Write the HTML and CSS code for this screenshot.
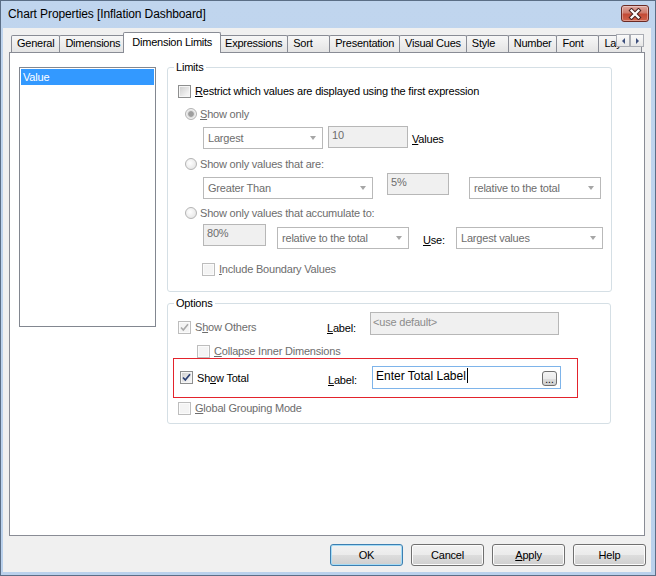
FILE: index.html
```html
<!DOCTYPE html>
<html>
<head>
<meta charset="utf-8">
<title>Chart Properties</title>
<link rel="stylesheet" href="styles.css">
</head>
<body>
<div class="window">
  <div class="titlebar">
    <span class="title">Chart Properties [Inflation Dashboard]</span>
    <div class="close">
      <svg width="14" height="12" viewBox="0 0 14 12">
        <path d="M3.5 2.5 L10.5 9.5 M10.5 2.5 L3.5 9.5" stroke="#4a2320" stroke-width="4.2" stroke-linecap="square"/>
        <path d="M3.5 2.5 L10.5 9.5 M10.5 2.5 L3.5 9.5" stroke="#ffffff" stroke-width="2.2" stroke-linecap="square"/>
      </svg>
    </div>
  </div>
  <div class="client">
    <div class="tabs">
      <div class="tab">General</div>
      <div class="tab">Dimensions</div>
      <div class="tab active">Dimension Limits</div>
      <div class="tab">Expressions</div>
      <div class="tab">Sort</div>
      <div class="tab">Presentation</div>
      <div class="tab">Visual Cues</div>
      <div class="tab">Style</div>
      <div class="tab">Number</div>
      <div class="tab">Font</div>
      <div class="tab">Layout</div>
      <div class="tab-scroll">
        <span class="sbtn"><span class="tri-left"></span></span>
        <span class="sbtn"><span class="tri-right"></span></span>
      </div>
    </div>
    <div class="panel">
      <div class="listbox">
        <div class="item selected">Value</div>
      </div>
      <div class="right">
        <fieldset class="group limits">
          <legend>Limits</legend>
          <div class="line restrict">
            <span class="cb"></span>
            <span class="lbl"><u>R</u>estrict which values are displayed using the first expression</span>
          </div>
          <div class="line radio-line r-only">
            <span class="rb on"></span>
            <span class="lbl dis"><u>S</u>how only</span>
          </div>
          <div class="ctrls c-only">
            <div class="combo combo-largest"><span class="val">Largest</span><span class="arrow"></span></div>
            <div class="tb tb-count">10</div>
            <span class="side-lbl values-lbl"><u>V</u>alues</span>
          </div>
          <div class="line radio-line r-values">
            <span class="rb"></span>
            <span class="lbl dis">Show only values that are:</span>
          </div>
          <div class="ctrls c-values">
            <div class="combo combo-greater"><span class="val">Greater Than</span><span class="arrow"></span></div>
            <div class="tb tb-pct">5%</div>
            <div class="combo combo-rel1"><span class="val">relative to the total</span><span class="arrow"></span></div>
          </div>
          <div class="line radio-line r-accum">
            <span class="rb"></span>
            <span class="lbl dis">Show only values that accumulate to:</span>
          </div>
          <div class="ctrls c-accum">
            <div class="tb tb-accum">80%</div>
            <div class="combo combo-rel2"><span class="val">relative to the total</span><span class="arrow"></span></div>
            <span class="side-lbl use-lbl"><u>U</u>se:</span>
            <div class="combo combo-use"><span class="val">Largest values</span><span class="arrow"></span></div>
          </div>
          <div class="line boundary">
            <span class="cb dis-cb"></span>
            <span class="lbl dis"><u>I</u>nclude Boundary Values</span>
          </div>
        </fieldset>

        <fieldset class="group options">
          <legend>Options</legend>
          <div class="opt-row others-row">
            <div class="opt-chk others-chk">
              <span class="cb dis-cb"><svg width="11" height="11" viewBox="0 0 11 11"><path d="M2 5.5 L4.3 8 L9 2.2" fill="none" stroke="#a9a9a9" stroke-width="1.6"/></svg></span>
              <span class="lbl dis">S<u>h</u>ow Others</span>
            </div>
            <span class="opt-label"><u>L</u>abel:</span>
            <div class="tb tb-label">&lt;use default&gt;</div>
          </div>
          <div class="line collapse">
            <span class="cb dis-cb"></span>
            <span class="lbl dis"><u>C</u>ollapse Inner Dimensions</span>
          </div>
          <div class="highlight">
            <div class="opt-row total-row">
              <div class="opt-chk total-chk">
                <span class="cb"><svg width="11" height="11" viewBox="0 0 11 11"><path d="M2 5.5 L4.3 8 L9 2.2" fill="none" stroke="#2a3f73" stroke-width="1.7"/></svg></span>
                <span class="lbl">Sh<u>o</u>w Total</span>
              </div>
              <span class="opt-label total-label"><u>L</u>abel:</span>
              <div class="input-focus">Enter Total Label<span class="caret"></span><span class="dots">...</span></div>
            </div>
          </div>
          <div class="line global">
            <span class="cb dis-cb"></span>
            <span class="lbl dis"><u>G</u>lobal Grouping Mode</span>
          </div>
        </fieldset>
      </div>
    </div>
    <div class="buttons">
      <div class="btn default">OK</div>
      <div class="btn">Cancel</div>
      <div class="btn"><u>A</u>pply</div>
      <div class="btn">Help</div>
    </div>
  </div>
</div>
</body>
</html>
```

FILE: styles.css
```css
* { box-sizing: border-box; }
html, body { margin: 0; padding: 0; }
body {
  width: 656px;
  height: 576px;
  overflow: hidden;
  font-family: "Liberation Sans", Arial, sans-serif;
  font-size: 11px;
  letter-spacing: -0.2px;
  color: #000;
  background: #fff;
}
u { text-decoration: underline; text-underline-offset: 1px; }

.window {
  width: 656px;
  height: 576px;
  display: flex;
  flex-direction: column;
  border: 1px solid #5b6e86;
  background: linear-gradient(#c0d5ee, #bad1ec);
  padding: 0 4px 3px 2px;
}

.titlebar {
  flex: none;
  height: 27px;
  display: flex;
  justify-content: space-between;
  align-items: flex-start;
  padding: 0 2px 0 5px;
}
.title {
  font-size: 12px;
  letter-spacing: -0.1px;
  line-height: 15px;
  margin-top: 6px;
}
.close {
  width: 28px;
  height: 17px;
  margin-top: 4px;
  border: 1px solid #6b2a24;
  border-radius: 3px;
  background: linear-gradient(#dca69f 0%, #cf7b6c 45%, #c34a36 55%, #d0634c 100%);
  box-shadow: inset 0 0 0 1px rgba(255,255,255,0.35);
  display: flex;
  align-items: center;
  justify-content: center;
}

.client {
  flex: 1;
  background: #f0f0f0;
  display: flex;
  flex-direction: column;
  padding: 0 6px;
}

/* tabs */
.tabs {
  flex: none;
  height: 25px;
  display: flex;
  align-items: flex-end;
  padding-left: 2px;
  position: relative;
  z-index: 1;
  overflow: hidden;
}
.tab {
  flex: none;
  height: 17px;
  min-width: 43px;
  margin-bottom: 1px;
  margin-right: -1px;
  padding: 0 5px;
  border: 1px solid #898c95;
  border-bottom: none;
  border-radius: 2px 2px 0 0;
  background: linear-gradient(#f7f7f7, #e4e4e4);
  line-height: 14px;
  letter-spacing: -0.25px;
  white-space: nowrap;
}
.tab.active {
  height: 21px;
  margin: 0 -2px 0 -2px;
  padding: 2px 8px 0;
  background: #fff;
  position: relative;
  z-index: 2;
}
.tab-scroll {
  position: absolute;
  right: 1px;
  top: 6px;
  display: flex;
  z-index: 3;
}
.sbtn {
  width: 14px;
  height: 13px;
  border: 1px solid #a9acb3;
  background: linear-gradient(#fafafa, #e6e6e6);
  display: flex;
  align-items: center;
  justify-content: center;
}
.tri-left {
  width: 0; height: 0;
  border-top: 3px solid transparent;
  border-bottom: 3px solid transparent;
  border-right: 3px solid #3d4f7c;
}
.tri-right {
  width: 0; height: 0;
  border-top: 3px solid transparent;
  border-bottom: 3px solid transparent;
  border-left: 3px solid #3d4f7c;
}

/* panel */
.panel {
  flex: none;
  height: 484px;
  margin-top: -1px;
  border: 1px solid #898c95;
  background: #fff;
  display: flex;
  align-items: flex-start;
  padding: 7px 0 0 9px;
}
.listbox {
  width: 137px;
  height: 260px;
  margin-top: 7px;
  border: 1px solid #828790;
  padding: 1px;
  background: #fff;
}
.item {
  height: 16px;
  line-height: 16px;
  padding-left: 2px;
}
.item.selected { background: #3399ff; color: #fff; }

.right {
  margin-left: 11px;
  display: flex;
  flex-direction: column;
}
.group {
  margin: 0;
  padding: 0;
  min-width: 0;
  width: 445px;
  border: 1px solid #d5dfe5;
  border-radius: 3px;
}
.group legend {
  padding: 0 2px;
  margin-left: 6px;
  line-height: 14px;
}
.limits { padding-bottom: 15px; }
.options { margin-top: 4px; padding-bottom: 8px; width: 444px; }

.line {
  display: flex;
  align-items: center;
  height: 14px;
}
.lbl { margin-left: 4px; white-space: nowrap; }
.radio-line .lbl { margin-left: 3px; }
.dis { color: #6d6d6d; }

.restrict { margin: 10px 0 0 10px; }
.r-only { margin: 9px 0 0 17px; }
.r-values { margin: 7px 0 0 17px; }
.r-accum { margin: 6px 0 0 17px; }
.boundary { margin: 12px 0 0 34px; }

.ctrls {
  display: flex;
  align-items: flex-start;
  margin-left: 35px;
}
.c-only { margin-top: 5px; height: 24px; }
.c-values { margin-top: 2px; height: 27px; }
.c-accum { margin-top: 4px; height: 26px; }

/* checkbox */
.cb {
  flex: none;
  width: 13px;
  height: 13px;
  border: 1px solid #8e8f8f;
  background: linear-gradient(135deg, #cbcbcb 0%, #f2f2f2 75%, #f8f8f8 100%);
  box-shadow: inset 0 0 0 1px #f6f6f6;
  display: flex;
  align-items: center;
  justify-content: center;
}
.cb.dis-cb {
  border-color: #bdbdbd;
  background: #f4f4f4;
  box-shadow: inset 0 0 0 1px #fbfbfb;
}

/* radio */
.rb {
  flex: none;
  width: 12px;
  height: 12px;
  border-radius: 50%;
  border: 1px solid #b4b4b4;
  background: radial-gradient(circle at 40% 40%, #ffffff 0%, #e6e6e6 80%);
}
.rb.on {
  background: radial-gradient(circle, #9e9e9e 0 2.4px, #d9d9d9 3.2px, #f1f1f1 4.5px, #e2e2e2 6px);
}

/* combo & textbox */
.combo {
  flex: none;
  height: 22px;
  margin-top: 1px;
  border: 1px solid #b9b9b9;
  background: #fff;
  display: flex;
  align-items: center;
  padding-left: 4px;
  color: #6d6d6d;
  white-space: nowrap;
}
.combo .val { flex: 1; }
.combo .arrow {
  width: 0; height: 0;
  border-left: 3.5px solid transparent;
  border-right: 3.5px solid transparent;
  border-top: 4px solid #a6a6a6;
  margin-right: 6px;
}
.tb {
  flex: none;
  height: 22px;
  border: 1px solid #b7b7b7;
  background: #f0f0f0;
  padding: 1px 3px;
  line-height: 14px;
  color: #6d6d6d;
  white-space: nowrap;
}
.side-lbl { line-height: 14px; white-space: nowrap; }

.combo-largest { width: 120px; }
.tb-count { width: 80px; margin-left: 5px; }
.values-lbl { margin: 6px 0 0 4px; }

.combo-greater { width: 170px; margin-top: 4px; }
.tb-pct { width: 62px; margin-left: 14px; }
.combo-rel1 { width: 132px; margin-left: 20px; margin-top: 4px; }

.tb-accum { width: 63px; }
.combo-rel2 { width: 132px; margin-left: 11px; margin-top: 3px; }
.use-lbl { width: 33px; margin: 9px 0 0 14px; }
.combo-use { width: 147px; margin-top: 3px; }

/* options */
.opt-row {
  display: flex;
  align-items: flex-end;
  height: 23px;
}
.opt-chk {
  flex: none;
  display: flex;
  align-items: center;
  height: 14px;
  margin-bottom: 1px;
}
.others-row { margin: 2px 0 0 10px; }
.others-chk { width: 149px; }
.opt-label { flex: none; width: 43px; line-height: 14px; }
.tb-label {
  width: 189px;
  height: 23px;
  padding: 2px 2px;
  color: #8c8c8c;
}
.collapse { margin: 9px 0 0 29px; }

.highlight {
  margin-left: 5px;
  width: 405px;
  border: 1px solid #e3232c;
  padding: 7px 0 8px 6px;
}
.total-row { align-items: center; }
.total-chk { width: 148px; margin-bottom: 0; }
.total-label { width: 44px; padding-top: 4px; }
.input-focus {
  flex: none;
  position: relative;
  width: 189px;
  height: 23px;
  border: 1px solid #7eb4ea;
  background: #fff;
  padding: 1px 3px 0;
  font-size: 12px;
  line-height: 16px;
  letter-spacing: 0;
  white-space: nowrap;
}
.caret {
  display: inline-block;
  width: 1px;
  height: 15px;
  background: #000;
  vertical-align: -3px;
  margin-left: 1px;
}
.dots {
  position: absolute;
  right: 3px;
  top: 4px;
  width: 15px;
  height: 15px;
  border: 1px solid #707070;
  border-radius: 3px;
  background: linear-gradient(#f4f4f4, #ebebeb 50%, #dddddd 51%, #d0d0d0);
  font-size: 10px;
  line-height: 15px;
  text-align: center;
  letter-spacing: 0;
}
.global { margin: 3px 0 0 10px; }

/* buttons */
.buttons {
  flex: none;
  display: flex;
  justify-content: flex-end;
  gap: 8px;
  margin-top: 8px;
  margin-right: -1px;
  height: 22px;
}
.btn {
  width: 73px;
  height: 22px;
  border: 1px solid #707070;
  border-radius: 3px;
  background: linear-gradient(#f2f2f2 0%, #ebebeb 50%, #dddddd 51%, #cfcfcf 100%);
  box-shadow: inset 0 0 0 1px #fcfcfc;
  text-align: center;
  line-height: 20px;
}
.btn.default {
  border-color: #3c7fb1;
  box-shadow: inset 0 0 0 1px #a6dcf6;
}
```
